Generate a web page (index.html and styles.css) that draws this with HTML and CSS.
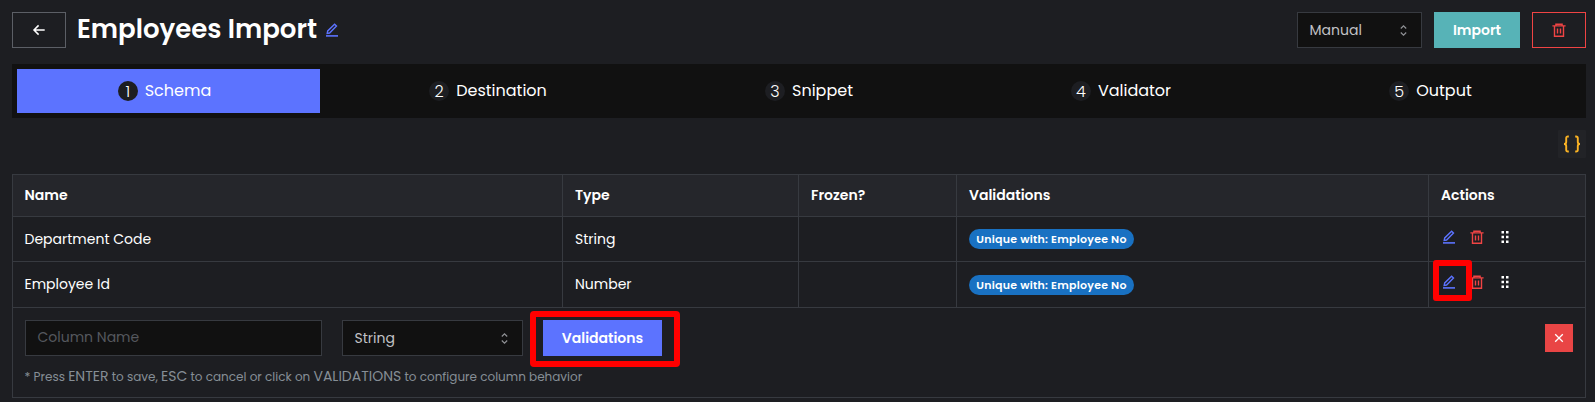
FILE: index.html
```html
<!DOCTYPE html>
<html lang="en">
<head>
<meta charset="utf-8">
<title>Employees Import</title>
<link rel="stylesheet" href="styles.css">
</head>
<body>
<svg class="sprite" aria-hidden="true">
  <symbol id="edit" viewBox="0 0 14 14"><path d="M1 12.9h12" stroke-width="1.6"/><path d="M2.2 10.4l.5-2.5L9.6 1.2l1.9 1.9-6.9 6.9z" stroke-width="1.4"/></symbol>
  <symbol id="trash" viewBox="0 0 14 14"><path d="M.4 2.9h13.2M3.9 2.2V1.200h6.200v1M2.500 3v10.300h9V3M5.500 5.600v5M8.500 5.600v5" stroke-width="1.400"/></symbol>
  <symbol id="updown" viewBox="0 0 15 15"><path d="M4.8 5.500L7.500 2.800l2.700 2.700M4.800 9.500l2.700 2.700 2.700-2.700" stroke-width="1.200"/></symbol>
  <symbol id="dots" viewBox="0 0 8 14"><path fill="#fff" stroke="none" d="M.5 1h2.500v2.500H.5zM5 1h2.500v2.500H5zM.5 5.700h2.500v2.500H.5zM5 5.700h2.500v2.500H5zM.5 10.500h2.500V13H.5zM5 10.500h2.500V13H5z"/></symbol>
</svg>
<main class="page">
  <header class="header">
    <button class="btn back"><svg width="14" height="14" viewBox="0 0 14 14"><path d="M12.700 7H2.200M6.600 2.400L2 7l4.600 4.600" stroke-width="1.500"/></svg></button>
    <h1 class="title">Employees Import</h1>
    <svg class="title-edit" width="14" height="14"><use href="#edit"/></svg>
    <div class="select mode"><span>Manual</span><svg width="15" height="15"><use href="#updown"/></svg></div>
    <button class="btn import">Import</button>
    <button class="btn delete"><svg width="14" height="14"><use href="#trash"/></svg></button>
  </header>
  <nav class="tabs">
    <div class="tab active"><span class="num">1</span><span>Schema</span></div>
    <div class="tab"><span class="num">2</span><span>Destination</span></div>
    <div class="tab"><span class="num">3</span><span>Snippet</span></div>
    <div class="tab"><span class="num">4</span><span>Validator</span></div>
    <div class="tab"><span class="num">5</span><span>Output</span></div>
  </nav>
  <div class="tools"><button class="json"><svg width="18" height="18" viewBox="0 0 18 18"><path d="M5.800 1.500H5c-1.200 0-1.800.6-1.800 1.800v3.600C3.200 8.200 2.500 9 1 9c1.500 0 2.200.8 2.200 2.100v3.600c0 1.200.6 1.800 1.800 1.800h.8M12.200 1.500h.8c1.200 0 1.800.6 1.800 1.800v3.600c0 1.300.7 2.100 2.200 2.100-1.500 0-2.200.8-2.200 2.100v3.600c0 1.200-.6 1.800-1.800 1.800h-.8" stroke-width="1.900"/></svg></button></div>
  <section class="table">
    <div class="row head">
      <div class="cell">Name</div><div class="cell">Type</div><div class="cell">Frozen?</div><div class="cell">Validations</div><div class="cell">Actions</div>
    </div>
    <div class="row first">
      <div class="cell">Department Code</div><div class="cell">String</div><div class="cell"></div><div class="cell"><span class="badge">Unique with: Employee No</span></div>
      <div class="cell actions"><svg class="blue" width="14" height="14"><use href="#edit"/></svg><svg class="red" width="14" height="14"><use href="#trash"/></svg><svg width="8" height="14"><use href="#dots"/></svg></div>
    </div>
    <div class="row second">
      <div class="cell">Employee Id</div><div class="cell">Number</div><div class="cell"></div><div class="cell"><span class="badge">Unique with: Employee No</span></div>
      <div class="cell actions"><svg class="blue" width="14" height="14"><use href="#edit"/></svg><svg class="red" width="14" height="14"><use href="#trash"/></svg><svg width="8" height="14"><use href="#dots"/></svg><i class="mark mark-edit"></i></div>
    </div>
    <div class="form">
      <div class="fields">
        <div class="input">Column Name</div>
        <div class="select type"><span>String</span><svg width="15" height="15"><use href="#updown"/></svg></div>
        <div class="validate"><button class="btn primary">Validations</button><i class="mark mark-validate"></i></div>
        <button class="close"><svg width="12" height="12" viewBox="0 0 12 12"><path d="M2.200 2.200l7.600 7.600M9.800 2.200L2.200 9.800" stroke-width="1.300"/></svg></button>
      </div>
      <p class="hint">* Press <b>ENTER</b> to save, <b>ESC</b> to cancel or click on <b>VALIDATIONS</b> to configure column behavior</p>
    </div>
  </section>
</main>
</body>
</html>
```
FILE: styles.css
```css
* { box-sizing: border-box; }
body { margin: 0; background: #1d1e22; color: #fff; font: 14px/20px Poppins, Inter, sans-serif; }
svg { fill: none; stroke: currentColor; flex: none; display: block; }
.sprite { display: none; }
button { border: 0; margin: 0; padding: 0; color: #fff; font: inherit; background: none; display: flex; align-items: center; justify-content: center; }
span, h1, p { white-space: nowrap; }
.page { width: 1574px; margin-left: 12px; padding-top: 12px; }
.header { display: flex; height: 36px; align-items: center; }
.btn { height: 36px; font-weight: 600; }
.back { width: 54px; border: 1px solid #5c5f66; }
.title { margin: -2px 0 0 11px; width: 248px; font-size: 26px; line-height: 36px; font-weight: 600; }
.title-edit { color: #5c73ff; margin-top: -1px; }
.select { display: flex; align-items: center; justify-content: space-between; height: 36px; border: 1px solid #373a40; background: #111; color: #c1c2c5; padding: 0 10px 0 12px; }
.select svg { color: #909296; }
.mode { width: 125px; margin-left: auto; }
.import { width: 86px; margin-left: 12px; background: #57b3b7; }
.delete { width: 54px; margin-left: 12px; border: 1px solid #f04444; color: #f04444; }
.tabs { margin-top: 16px; height: 54px; padding: 5px; background: #111; display: grid; grid-template-columns: 303fr 336fr 306fr 318fr 301fr; font-size: 16px; }
.tab { display: flex; align-items: center; justify-content: center; gap: 7px; }
.active { background: #5c73ff; padding-right: 8px; }
.num { width: 20px; height: 20px; border-radius: 50%; background: #1d1e22; font-size: 16px; line-height: 21px; font-weight: 300; text-align: center; }
.tools { height: 56px; padding-top: 12px; display: flex; justify-content: flex-end; }
.json { width: 28px; height: 28px; background: #222327; color: #fbb324; border-radius: 1px; }
.table { border: 1px solid #373a40; }
.row { display: grid; grid-template-columns: 550px 236px 158px 472px 156px; border-bottom: 1px solid #373a40; }
.cell { display: flex; align-items: center; padding-left: 12px; border-right: 1px solid #373a40; }
.cell:first-child { padding-left: 11.5px; }
.cell:last-child { border-right: 0; }
.head { height: 42px; background: #25262b; font-weight: 600; }
.head .cell { padding-bottom: 1px; }
.first { height: 45px; }
.second { height: 46px; }
.second .cell { padding-bottom: 2px; }
.badge { height: 20px; width: 165px; border-radius: 10px; background: #1971c2; font-size: 11px; font-weight: 600; letter-spacing: .25px; display: flex; align-items: center; justify-content: center; }
.second .badge { margin-top: 3px; }
.actions { position: relative; padding-left: 13px; gap: 14px; padding-bottom: 4px; }
.second .actions { padding-bottom: 6px; }
.actions svg:nth-of-type(3) { margin-left: 3px; }
.blue { color: #5c73ff; }
.red { color: #f04444; }
.form { height: 89px; padding: 12px; }
.fields { display: flex; align-items: center; }
.input { width: 297px; height: 36px; background: #111; border: 1px solid #373a40; color: #55585e; padding: 6px 11.5px; }
.type { width: 181px; margin-left: 20px; }
.type, .mode { padding-left: 11.5px; }
.validate { position: relative; margin-left: 20px; }
.primary { width: 119px; background: #5c73ff; }
.close { width: 28px; height: 28px; background: #e94545; margin-left: auto; }
.hint { margin: 10px 0 0 -.5px; font-size: 12px; color: #868e96; }
.hint b { font-weight: 400; font-size: 14px; }
.mark { position: absolute; border: 6px solid #f00; }
.mark-validate { left: -13px; top: -9px; width: 150px; height: 56px; border-radius: 4px; }
.mark-edit { left: 4px; top: -2px; width: 39px; height: 41px; border-radius: 3px; }
```
